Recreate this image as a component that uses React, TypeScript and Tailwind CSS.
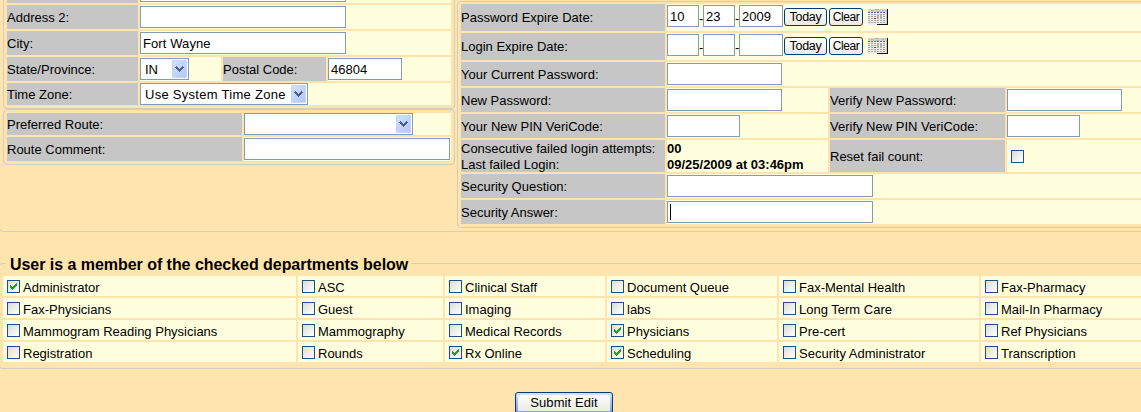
import type { ReactNode } from 'react';
import clsx from 'clsx';

function Label({ className, shift = 'pt-[2px]', children }: { className?: string; shift?: string; children: ReactNode }) {
  return (
    <div className={clsx('flex shrink-0 items-center bg-[#c6c6c6] whitespace-nowrap', shift, className)}>
      <span>{children}</span>
    </div>
  );
}

function Value({ className, children }: { className?: string; children?: ReactNode }) {
  return <div className={clsx('flex shrink-0 items-center bg-[#ffffde]', className)}>{children}</div>;
}

function Field({ className, children }: { className: string; children?: ReactNode }) {
  return (
    <div
      className={clsx(
        'flex h-[22px] shrink-0 items-center border border-[#7f9db9] bg-white pt-[2px] pl-[2px] whitespace-nowrap',
        className,
      )}
    >
      {children}
    </div>
  );
}

function Select({ className, children }: { className: string; children?: ReactNode }) {
  return (
    <div
      className={clsx(
        'flex h-[22px] shrink-0 items-center justify-between border border-[#7f9db9] bg-white pr-px pl-[4px] whitespace-nowrap',
        className,
      )}
    >
      <span className="pt-[2px]">{children}</span>
      <div className="flex h-[18px] w-[15px] items-center justify-center rounded-[1px] border border-[#c5d3f7] bg-linear-to-br from-[#d3e0fe] to-[#b2c8f8]">
        <svg width="9" height="6" viewBox="0 0 9 6" shapeRendering="crispEdges" fill="#4d6185">
          <path d="M1 0h1v1h1v1h1v1h1v-1h1v-1h1v-1h1v1h1v1h-1v1h-1v1h-1v1h-1v1h-1v-1h-1v-1h-1v-1h-1v-1h-1v-1h1z" />
        </svg>
      </div>
    </div>
  );
}

function SmallButton({ className, children }: { className: string; children: ReactNode }) {
  return (
    <button
      className={clsx(
        'flex h-[18px] shrink-0 items-center justify-center rounded-[3px] border border-[#003c74] bg-linear-to-b from-white to-[#ebeae3] whitespace-nowrap',
        className,
      )}
    >
      {children}
    </button>
  );
}

function Checkbox({ checked }: { checked?: boolean }) {
  return (
    <span className="flex size-[13px] shrink-0 items-center justify-center border border-[#1c5180] bg-linear-to-br from-[#dcdcd7] to-white">
      {checked && (
        <svg width="7" height="7" viewBox="0 0 7 7" shapeRendering="crispEdges" fill="#21a121">
          <path d="M0 2h1v1h1v1h1v-1h1v-1h1v-1h1v-1h1v3h-1v1h-1v1h-1v1h-1v1h-1v-1h-1v-1h-1z" />
        </svg>
      )}
    </span>
  );
}

const gridColumns = [0, 3, 6, 9, 12, 15];
const gridRows = [5, 7, 9, 11, 13];

function CalendarIcon() {
  return (
    <svg className="ml-[5px] shrink-0" width="20" height="16" viewBox="0 0 20 16" shapeRendering="crispEdges">
      <rect width="20" height="16" fill="#eeece9" />
      <path d="M0 0h19v3H0z" fill="#d3d1cd" />
      <path d="M3 1h2v1H3zM7 0h4v1H7zM8 2h3v1H8zM14 1h2v1h-2z" fill="#b4b2ae" />
      {gridColumns.map((x) => (
        <rect key={x} x={x} y="3" width="2" height="1" fill="#5461e6" />
      ))}
      {gridRows.map((y) =>
        gridColumns.map((x) => <rect key={`${x}-${y}`} x={x} y={y} width="2" height="1" fill="#a5a4a3" />),
      )}
      <path d="M9 5h2v5H9zM12 5h2v5h-2z" fill="#b2b1b0" />
      <rect x="6" y="9" width="2" height="1" fill="#ee1111" />
      <path d="M18 1h1v14h-1z" fill="#c9c7c3" />
      <path d="M19 0h1v16h-1zM9 15h10v1H9z" fill="#111" />
    </svg>
  );
}

function DateRow({ label, parts }: { label: string; parts: [string, string, string] }) {
  return (
    <div className="flex h-[27px] gap-[2px]">
      <Label className="w-[204px]" shift="pt-px">
        {label}
      </Label>
      <Value className="w-[480px] pb-px">
        <div className="flex items-center pb-[2px]">
          <Field className="w-[32px]">{parts[0]}</Field>
          <span className="h-[22px] w-[4px] pt-[6px] text-center">-</span>
          <Field className="w-[32px]">{parts[1]}</Field>
          <span className="h-[22px] w-[4px] pt-[6px] text-center">-</span>
          <Field className="w-[44px]">{parts[2]}</Field>
        </div>
        <SmallButton className="ml-px w-[43px] text-[12.5px] tracking-[-0.3px]">Today</SmallButton>
        <SmallButton className="ml-[2px] w-[34px] text-[12px] tracking-[-0.4px]">Clear</SmallButton>
        <CalendarIcon />
      </Value>
    </div>
  );
}

const departments = [
  ['Administrator', 'ASC', 'Clinical Staff', 'Document Queue', 'Fax-Mental Health', 'Fax-Pharmacy'],
  ['Fax-Physicians', 'Guest', 'Imaging', 'labs', 'Long Term Care', 'Mail-In Pharmacy'],
  ['Mammogram Reading Physicians', 'Mammography', 'Medical Records', 'Physicians', 'Pre-cert', 'Ref Physicians'],
  ['Registration', 'Rounds', 'Rx Online', 'Scheduling', 'Security Administrator', 'Transcription'],
];

const memberOf = ['Administrator', 'Physicians', 'Rx Online', 'Scheduling'];

export default function App() {
  return (
    <div className="h-[412px] w-[1141px] overflow-hidden bg-[#ffe4ad] font-['Liberation_Sans',Arial,sans-serif] text-[13px] leading-[16px] text-black">
      <div className="-ml-px flex h-[232px] w-[1160px] gap-[2px] rounded-b-[4px] border-b border-l border-[#d0d0bf] pl-[3px]">
        <div className="w-[452px] shrink-0">
          <div className="flex h-[109px] flex-col gap-[2px] rounded-b-[4px] border-x border-b border-[#d0d0bf] px-[3px]">
            <div className="flex h-[3px] gap-[2px]">
              <Label className="w-[131px]"> </Label>
              <Value className="w-[311px]">
                <div className="h-[2px] w-[206px] self-start border-x border-b border-[#7f9db9] bg-white" />
              </Value>
            </div>
            <div className="flex h-[24px] gap-[2px]">
              <Label className="w-[131px]">Address 2:</Label>
              <Value className="w-[311px]">
                <Field className="w-[206px]" />
              </Value>
            </div>
            <div className="flex h-[24px] gap-[2px]">
              <Label className="w-[131px]">City:</Label>
              <Value className="w-[311px]">
                <Field className="w-[206px] tracking-[0.1px]">Fort Wayne</Field>
              </Value>
            </div>
            <div className="flex h-[24px] gap-[2px]">
              <Label className="w-[131px]">State/Province:</Label>
              <Value className="w-[81px]">
                <Select className="w-[49px]">IN</Select>
              </Value>
              <Label className="w-[103px]">Postal Code:</Label>
              <Value className="w-[123px]">
                <Field className="w-[74px]">46804</Field>
              </Value>
            </div>
            <div className="flex h-[22px] gap-[2px]">
              <Label className="w-[131px]">Time Zone:</Label>
              <Value className="w-[311px]">
                <Select className="w-[168px] tracking-[0.28px]">Use System Time Zone</Select>
              </Value>
            </div>
          </div>
          <div className="flex h-[56px] flex-col gap-[2px] rounded-[4px] border border-[#d0d0bf] p-[3px]">
            <div className="flex h-[22px] gap-[2px]">
              <Label className="w-[235px]">Preferred Route:</Label>
              <Value className="w-[207px]">
                <Select className="w-[169px]" />
              </Value>
            </div>
            <div className="flex h-[24px] gap-[2px]">
              <Label className="w-[235px]">Route Comment:</Label>
              <Value className="w-[207px]">
                <Field className="w-[206px]" />
              </Value>
            </div>
          </div>
        </div>

        <div className="mt-px flex h-[227px] w-[694px] shrink-0 flex-col gap-[2px] rounded-[4px] border border-[#d0d0bf] px-[3px] pt-[2px]">
          <DateRow label="Password Expire Date:" parts={['10', '23', '2009']} />
          <DateRow label="Login Expire Date:" parts={['', '', '']} />
          <div className="flex h-[24px] gap-[2px]">
            <Label className="w-[204px]">Your Current Password:</Label>
            <Value className="w-[480px]">
              <Field className="w-[115px]" />
            </Value>
          </div>
          <div className="flex h-[24px] gap-[2px]">
            <Label className="w-[204px]">New Password:</Label>
            <Value className="w-[161px]">
              <Field className="w-[115px]" />
            </Value>
            <Label className="w-[175px]">Verify New Password:</Label>
            <Value className="w-[140px]">
              <Field className="w-[115px]" />
            </Value>
          </div>
          <div className="flex h-[24px] gap-[2px]">
            <Label className="w-[204px]">Your New PIN VeriCode:</Label>
            <Value className="w-[161px]">
              <Field className="w-[73px]" />
            </Value>
            <Label className="w-[175px]">Verify New PIN VeriCode:</Label>
            <Value className="w-[140px]">
              <Field className="w-[73px]" />
            </Value>
          </div>
          <div className="flex h-[32px] gap-[2px]">
            <Label className="w-[204px]" shift="[&>span]:-mb-[2px]">
              Consecutive failed login attempts:
              <br />
              Last failed Login:
            </Label>
            <Value className="w-[161px] font-bold">
              <span className="-mb-[2px]">
                00
                <br />
                09/25/2009 at 03:46pm
              </span>
            </Value>
            <Label className="w-[175px]">Reset fail count:</Label>
            <Value className="w-[140px] pl-[4px]">
              <Checkbox />
            </Value>
          </div>
          <div className="flex h-[24px] gap-[2px]">
            <Label className="w-[204px]">Security Question:</Label>
            <Value className="w-[480px]">
              <Field className="w-[206px]" />
            </Value>
          </div>
          <div className="flex h-[24px] gap-[2px]">
            <Label className="w-[204px]">Security Answer:</Label>
            <Value className="w-[480px]">
              <Field className="w-[206px]">
                <span className="-mt-[2px] h-[16px] w-px bg-black" />
              </Field>
            </Value>
          </div>
        </div>
      </div>

      <div className="mt-[23px] flex h-[18px] items-center">
        <div className="mt-[8px] -ml-px h-[9px] w-[7px] self-start rounded-tl-[4px] border-t border-l border-[#d0d0bf]" />
        <h2 className="mx-[4px] w-[398px] pt-[2px] text-[16px] leading-[18px] font-bold tracking-[-0.04px] whitespace-nowrap">
          User is a member of the checked departments below
        </h2>
        <div className="mt-[8px] h-px grow self-start bg-[#d0d0bf]" />
      </div>
      <div className="-ml-px flex h-[96px] w-[1160px] flex-col gap-[2px] rounded-bl-[4px] border-b border-l border-[#d0d0bf] pt-[3px] pl-[3px]">
        {departments.map((row) => (
          <div
            key={row[0]}
            className="grid h-[20px] grid-cols-[293px_145px_160px_170px_200px_170px] gap-[2px]"
          >
            {row.map((name) => (
              <div key={name} className="flex items-start gap-[3px] bg-[#ffffde] pt-[4px] pl-[4px] whitespace-nowrap">
                <Checkbox checked={memberOf.includes(name)} />
                <span className="h-[16px]">{name}</span>
              </div>
            ))}
          </div>
        ))}
      </div>

      <button className="mt-[23px] ml-[515px] flex h-[22px] w-[98px] items-center justify-center rounded-[3px] border border-[#003c74] bg-linear-to-b from-[#cee7ff] to-[#7d9be6] p-[2px]">
        <span className="flex h-full w-full items-center justify-center bg-linear-to-b from-[#fbfbf9] to-[#ecebe5] tracking-[0.1px]">
          Submit Edit
        </span>
      </button>
    </div>
  );
}
